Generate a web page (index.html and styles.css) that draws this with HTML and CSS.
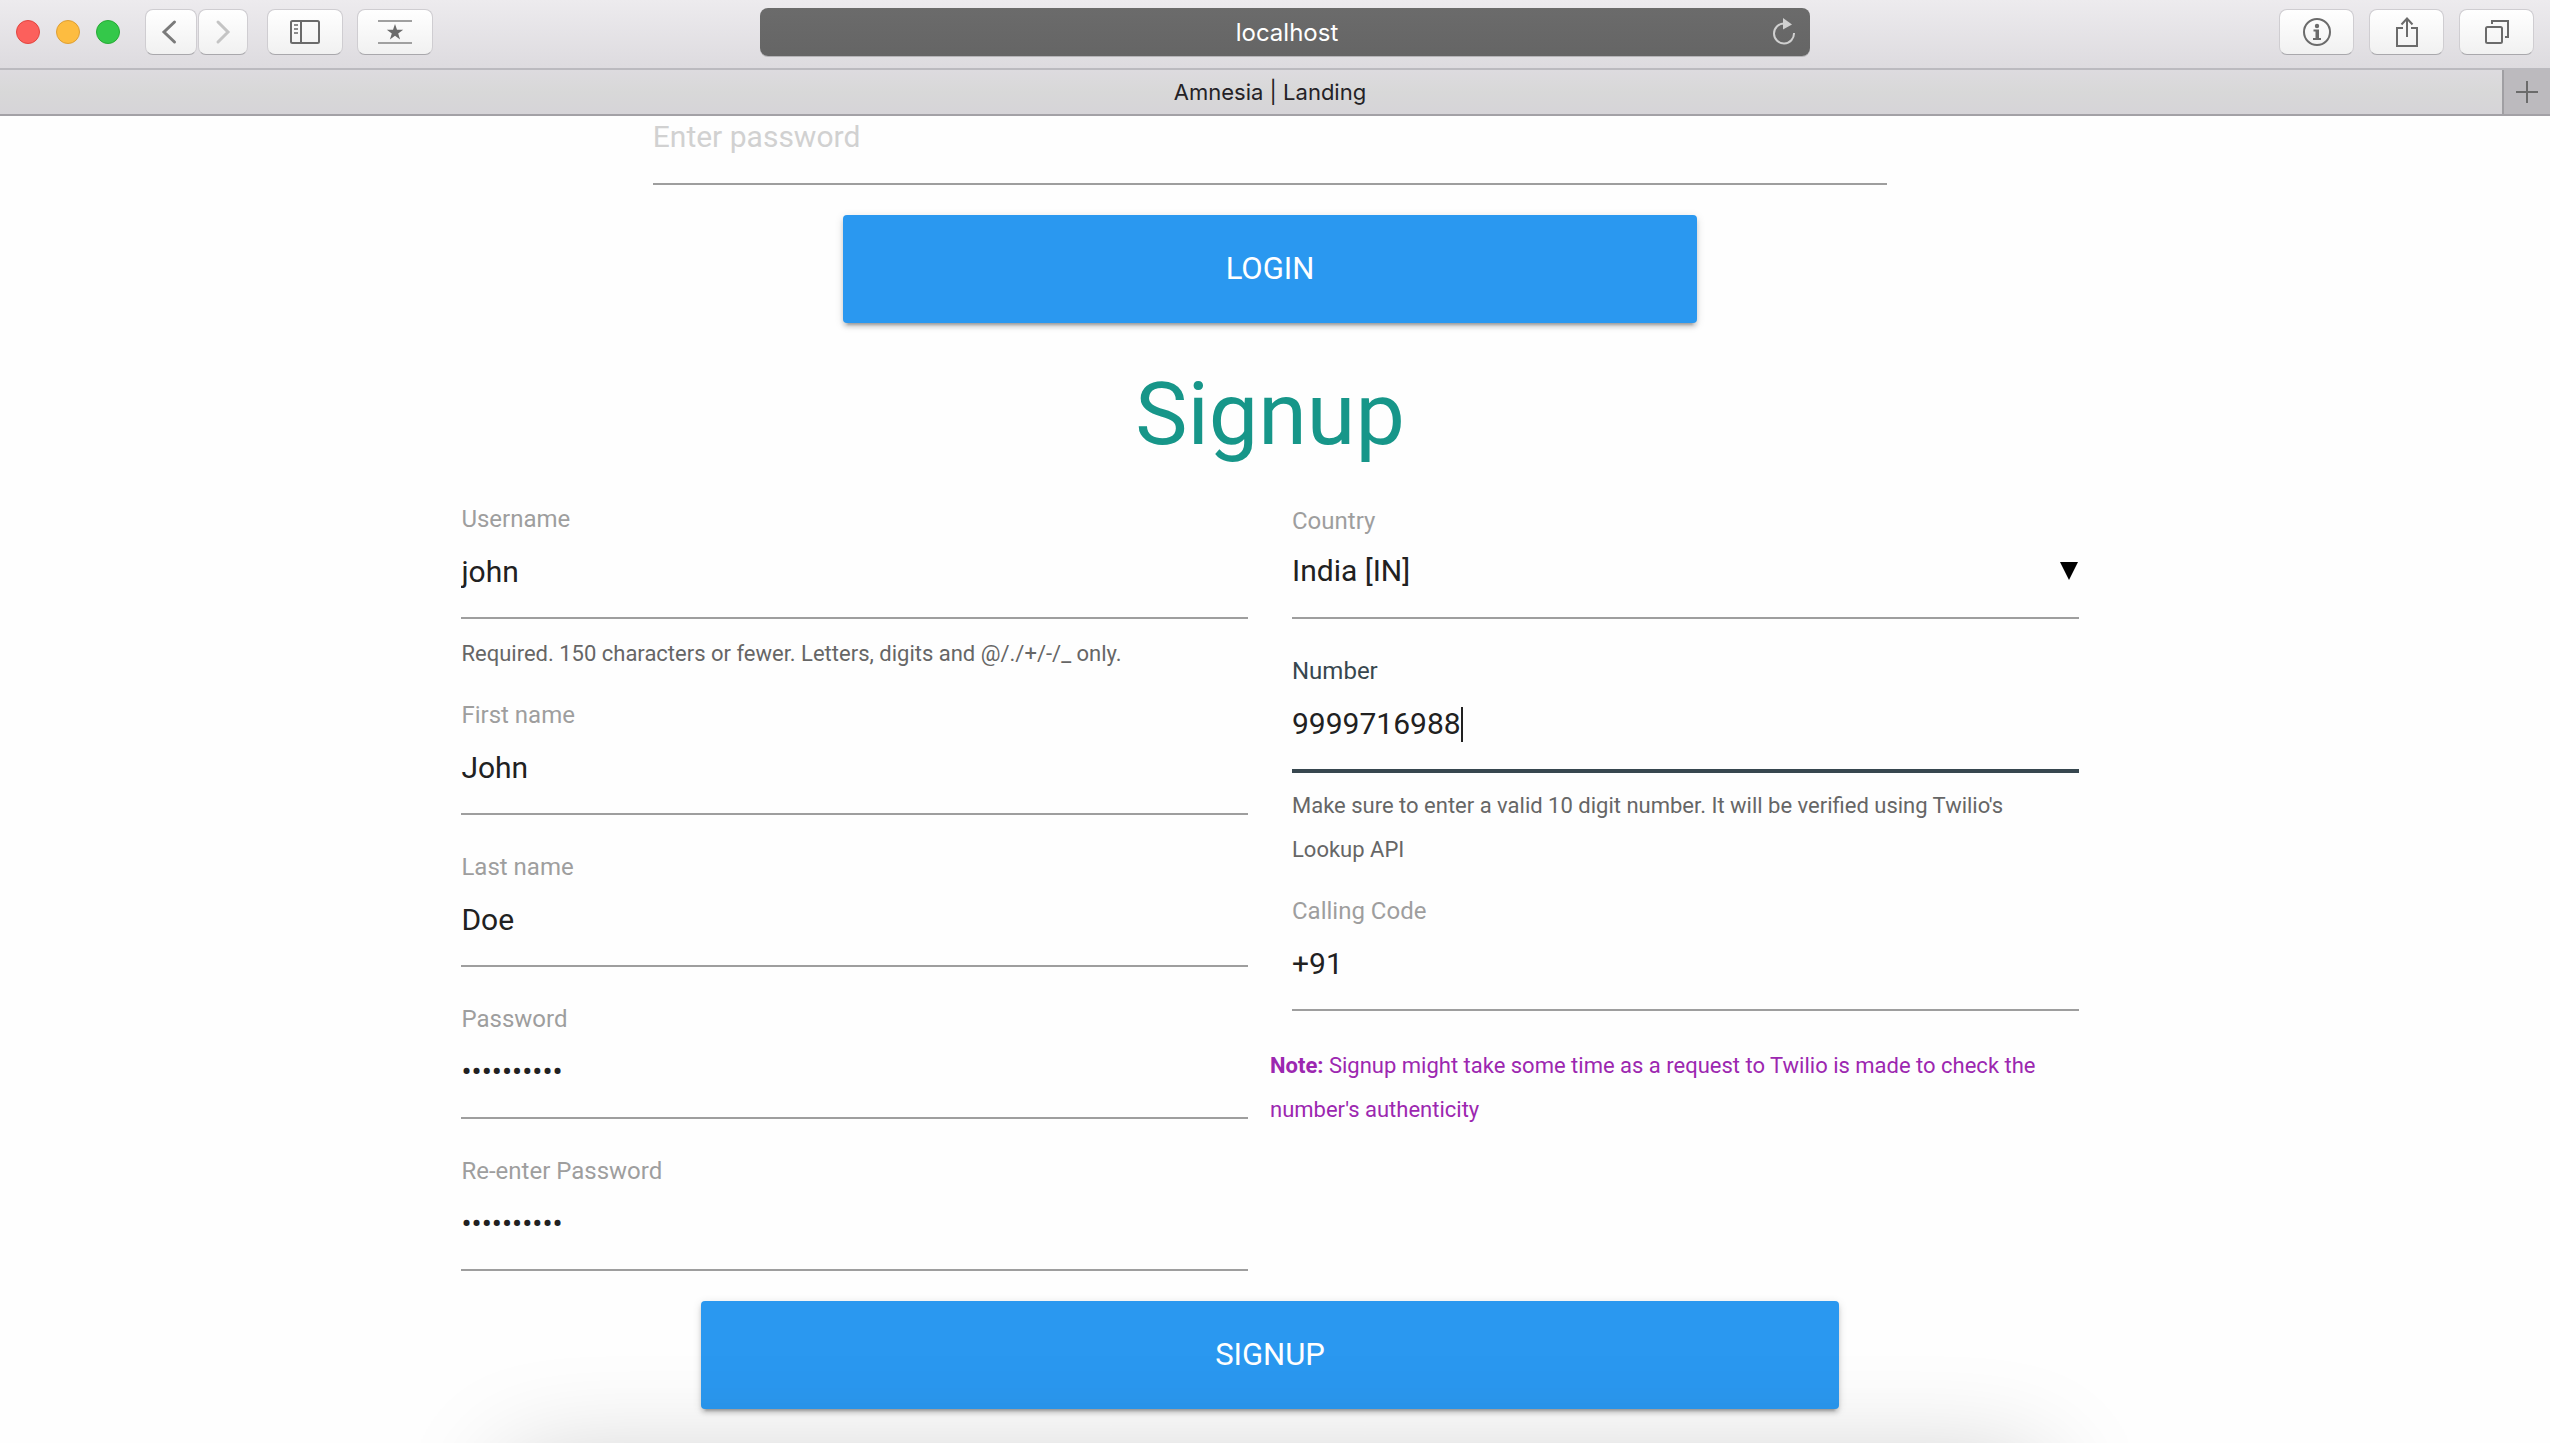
FILE: index.html
```html
<!DOCTYPE html>
<html lang="en">
<head>
<meta charset="utf-8">
<title>Amnesia | Landing</title>
<link rel="stylesheet" href="styles.css">
</head>
<body>
<header class="browser">
  <div class="toolbar">
    <div class="tools">
      <div class="lights">
        <button class="light light-close" aria-label="Close"></button>
        <button class="light light-min" aria-label="Minimize"></button>
        <button class="light light-max" aria-label="Zoom"></button>
      </div>
      <div class="history">
        <button class="tool tool-back" aria-label="Back">
          <svg width="16" height="26" viewBox="0 0 16 26"><path d="M13.500 3 3 13l10.500 10" fill="none" stroke="#7a7a7a" stroke-width="3" stroke-linecap="round"/></svg>
        </button>
        <button class="tool tool-forward" aria-label="Forward">
          <svg width="16" height="26" viewBox="0 0 16 26"><path d="M3 3l10 10L3 23" fill="none" stroke="#c4c4c4" stroke-width="3" stroke-linecap="round"/></svg>
        </button>
      </div>
      <button class="tool tool-sidebar" aria-label="Show sidebar">
        <svg width="30" height="24" viewBox="0 0 30 24" fill="none" stroke="#6b6b6b" stroke-width="2"><rect x="1" y="1" width="28" height="22" rx="1.500"/><path d="M11 1v22"/><path d="M4 5h4M4 9h4M4 13h4" stroke="#8c8c8c"/></svg>
      </button>
      <button class="tool" aria-label="Top sites">
        <svg width="34" height="26" viewBox="0 0 34 26"><path d="M0 2h34M0 24h34" stroke="#a0a0a0" stroke-width="2"/><path d="M17 5l2 5.700h6.200l-5 3.700 1.900 6.100-5.100-3.700-5.100 3.700 1.900-6.100-5-3.700H15z" fill="#6b6b6b"/></svg>
      </button>
    </div>
    <div class="address">
      <input class="address-input" type="text" value="localhost" aria-label="Address">
      <button class="reload" aria-label="Reload">
        <svg width="24" height="28" viewBox="0 0 24 28"><path d="M12 5.500A10 10 0 1 0 22 15" fill="none" stroke="#d0d0d0" stroke-width="2"/><path d="M11 0l9 6.500-9 5z" fill="#d0d0d0"/></svg>
      </button>
    </div>
    <div class="actions">
      <button class="tool" aria-label="Site information">
        <svg width="28" height="28" viewBox="0 0 28 28"><circle cx="14" cy="14" r="13" fill="none" stroke="#6b6b6b" stroke-width="2"/><circle cx="14" cy="8" r="2.200" fill="#6b6b6b"/><path d="M10.500 11.500h5.500v8.500h2v2h-8v-2h2.500v-6.500h-2z" fill="#6b6b6b"/></svg>
      </button>
      <button class="tool" aria-label="Share">
        <svg width="24" height="32" viewBox="0 0 24 32" fill="none" stroke="#6b6b6b" stroke-width="2"><path d="M8 12H2v18h20V12h-6"/><path d="M12 21V3M6.500 8.500 12 2.500l5.500 6"/></svg>
      </button>
      <button class="tool" aria-label="Show tabs">
        <svg width="26" height="26" viewBox="0 0 26 26" fill="none" stroke="#6b6b6b" stroke-width="2"><rect x="2" y="8" width="16" height="16" rx="1.500"/><path d="M8 5V2h16v16h-3"/></svg>
      </button>
    </div>
  </div>
  <div class="tabs">
    <div class="tab">Amnesia | Landing</div>
    <button class="new-tab" aria-label="New tab">
      <svg width="22" height="22" viewBox="0 0 22 22"><path d="M11 0v22M0 11h22" stroke="#6b6b6b" stroke-width="2"/></svg>
    </button>
  </div>
</header>

<main class="page">
  <form class="login">
    <input class="control login-password" type="password" placeholder="Enter password" aria-label="Password">
    <button class="btn btn-login" type="button">LOGIN</button>
  </form>

  <h1 class="title">Signup</h1>

  <form class="signup">
    <div class="columns">
      <div class="fields">
        <div class="field">
          <label for="username">Username</label>
          <input class="control" id="username" type="text" value="john">
          <p class="help">Required. 150 characters or fewer. Letters, digits and @/./+/-/_ only.</p>
        </div>
        <div class="field">
          <label for="first">First name</label>
          <input class="control" id="first" type="text" value="John">
        </div>
        <div class="field">
          <label for="last">Last name</label>
          <input class="control" id="last" type="text" value="Doe">
        </div>
        <div class="field">
          <label for="pass">Password</label>
          <input class="control" id="pass" type="password" value="amnesia123">
        </div>
        <div class="field">
          <label for="pass2">Re-enter Password</label>
          <input class="control" id="pass2" type="password" value="amnesia123">
        </div>
      </div>
      <div class="side">
        <div class="fields">
          <div class="field field-select">
            <label for="country">Country</label>
            <div class="select-wrap">
              <select class="control" id="country"><option>India [IN]</option></select>
              <svg class="arrow" width="18" height="18" viewBox="0 0 18 18"><path d="M0 0h18L9 18z"/></svg>
            </div>
          </div>
          <div class="field active">
            <label for="number">Number</label>
            <div class="caret-wrap">
              <input class="control" id="number" type="text" value="9999716988">
              <span class="caret"></span>
            </div>
            <p class="help">Make sure to enter a valid 10 digit number. It will be verified using Twilio's Lookup API</p>
          </div>
          <div class="field">
            <label for="code">Calling Code</label>
            <input class="control" id="code" type="text" value="+91">
          </div>
        </div>
        <p class="note"><strong>Note:</strong> Signup might take some time as a request to Twilio is made to check the number's authenticity</p>
      </div>
    </div>
    <button class="btn btn-signup" type="button">SIGNUP</button>
  </form>
</main>
<div class="dock-shadow"></div>
</body>
</html>
```
FILE: styles.css
```css
* { box-sizing: border-box; }

body {
  margin: 0;
  background: #fefefe;
  color: #212121;
  font-family: Roboto, sans-serif;
  font-size: 30px;
  overflow: hidden;
}

button, input, select { font: inherit; color: inherit; margin: 0; }
button { border: 0; padding: 0; }
svg { display: block; }
p { margin: 0; }

/* Browser window */
.browser { font-family: Inter, sans-serif; }

.toolbar {
  display: grid;
  grid-template-columns: 744fr 1050fr 724fr;
  align-items: center;
  height: 70px;
  padding: 0 16px 4px;
  border-bottom: 2px solid #bbbabf;
  background: linear-gradient(#edebee, #dddbdf);
}

.tools, .actions, .lights, .history { display: flex; align-items: center; }
.tools { gap: 14px; }
.lights { gap: 16px; margin-right: 11px; }
.history { gap: 1px; margin-right: 5px; }
.actions { gap: 15px; justify-content: flex-end; }

.light { width: 24px; height: 24px; border: 1px solid; border-radius: 50%; }
.light-close { background: #fc605c; border-color: #e2453f; }
.light-min { background: #fdbc40; border-color: #de9f34; }
.light-max { background: #34c84a; border-color: #27aa35; }

.tool {
  display: flex;
  align-items: center;
  justify-content: center;
  width: 76px;
  height: 46px;
  border: 1px solid #cfcdd1;
  border-bottom-color: #a9a8ac;
  border-radius: 8px;
  background: linear-gradient(#ffffff, #f1f1f1);
}
.actions .tool { width: 75px; }
.history .tool { width: 52px; }
.history .tool-forward { width: 50px; }
.tool-back { padding-right: 4px; }

.address {
  display: flex;
  align-items: center;
  height: 48px;
  padding: 0 14px 0 42px;
  border-radius: 8px;
  background: linear-gradient(#6b6b6b, #656565);
  box-shadow: 0 1px 0 #b5b4b7;
}
.address-input {
  flex: 1;
  min-width: 0;
  border: 0;
  padding: 0;
  background: none;
  color: #ffffff;
  font-size: 24px;
  text-align: center;
}
.reload { background: none; }

.tabs {
  display: flex;
  height: 46px;
  border-bottom: 2px solid #a3a1a6;
  background: linear-gradient(#dddbdf, #d8d8d8 50%, #d6d4d8);
}
.tab {
  flex: 1;
  padding-left: 38px;
  color: #242226;
  font-size: 22px;
  line-height: 44px;
  text-align: center;
}
.new-tab {
  display: flex;
  align-items: center;
  justify-content: center;
  width: 48px;
  border-left: 2px solid #a09fa3;
  background: #bcbabe;
}

/* Page */
.page {
  display: flex;
  flex-direction: column;
  align-items: center;
  padding: 0 10px 34px 0;
}

.control {
  display: block;
  width: 100%;
  height: 89px;
  padding: 0 0 4px;
  border: 0;
  border-bottom: 2px solid #9e9e9e;
  border-radius: 0;
  outline: 0;
  background: transparent;
  appearance: none;
}
.control::placeholder { color: #d1d1d1; }

.login {
  display: flex;
  flex-direction: column;
  align-items: center;
  gap: 30px;
  width: 100%;
}
.login-password { width: 48.6%; height: 69px; padding-bottom: 26px; }

.btn {
  height: 108px;
  padding-bottom: 2px;
  border-radius: 4px;
  background: #2a98f0;
  color: #ffffff;
  font-size: 31px;
  box-shadow: 0 4px 4px rgba(0, 0, 0, .14), 0 6px 2px -4px rgba(0, 0, 0, .2), 0 2px 10px rgba(0, 0, 0, .12);
}
.btn-login { width: 33.6%; }
.btn-signup { width: 44.8%; }

.title {
  margin: 43px 0 46px;
  color: #179689;
  font-size: 88px;
  font-weight: 400;
  line-height: 96px;
}

.signup {
  display: flex;
  flex-direction: column;
  align-items: center;
  gap: 18px;
  width: 100%;
}
.columns { display: grid; grid-template-columns: 1fr 1fr; width: 65.4%; }

.fields {
  display: flex;
  flex-direction: column;
  gap: 29px;
  padding: 0 22px;
}
.field { padding-bottom: 12px; }
.field label {
  display: block;
  color: #9e9e9e;
  font-size: 24px;
  line-height: 22px;
}
.help {
  margin-top: 13px;
  margin-bottom: -13px;
  color: #666666;
  font-size: 22px;
  line-height: 44px;
}

.field-select { padding-top: 2px; }
.field-select .control { height: 87px; padding-bottom: 8px; }
.select-wrap, .caret-wrap { position: relative; }
.arrow { position: absolute; right: 1px; top: 30px; pointer-events: none; }

.active label { color: #37474f; }
.active .control { border-color: #37474f; box-shadow: 0 2px 0 #37474f; }
.caret {
  position: absolute;
  left: 10ch;
  top: 25px;
  width: 2px;
  height: 35px;
  background: #212121;
}

.note {
  margin-top: 21px;
  color: #9c27b0;
  font-size: 22px;
  line-height: 44px;
}

/* Soft shadow rising from the dock below the window */
.dock-shadow {
  position: fixed;
  left: 20%;
  right: 20%;
  bottom: -222px;
  height: 200px;
  box-shadow: 0 0 108px rgba(0, 0, 0, .22);
  pointer-events: none;
}
```
